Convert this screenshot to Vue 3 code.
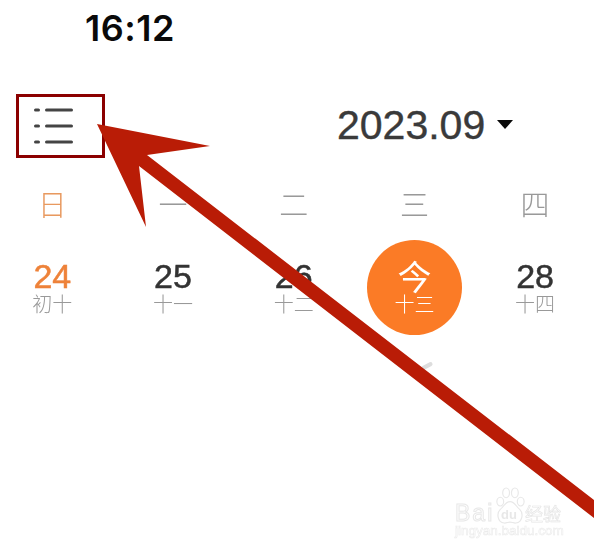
<template>
  <div class="page">
    <div class="status">16:12</div>

    <header class="head">
      <button class="menu" type="button">
        <svg width="40" height="36" viewBox="0 0 40 36">
          <g fill="none" stroke="#444" stroke-width="3" stroke-linecap="round">
            <path d="M2.500 2h3M13.500 2h25" />
            <path d="M2.500 18h3M13.500 18h25" />
            <path d="M2.500 34h3M13.500 34h25" />
          </g>
        </svg>
      </button>
      <div class="month">
        <span>2023.09</span>
        <i class="caret"></i>
      </div>
    </header>

    <div class="week">
      <span v-for="(w, i) in weekdays" :key="w" :class="{ sun: i === 0 }">{{ w }}</span>
    </div>

    <div class="days">
      <div
        v-for="d in days"
        :key="d.num"
        class="day"
        :class="{ sun: d.sun, today: d.today }"
      >
        <b>{{ d.today ? '今' : d.num }}</b>
        <small>{{ d.lunar }}</small>
      </div>
    </div>

    <div class="grip"></div>

    <svg class="arrow" width="594" height="551" viewBox="0 0 594 551">
      <path
        fill="#b91c06"
        d="M97 124 L210 146 L147 155 L594 500 L594 518 L139 166 L146 227 Z"
      />
    </svg>

    <div class="mark">
      <span class="bai">Bai</span>
      <span class="paw">
        <svg width="30" height="37" viewBox="0 0 30 38">
          <g fill="#fff" stroke="#e8e8e8" stroke-width="1.200">
            <ellipse cx="5" cy="15" rx="3.500" ry="4.500" />
            <ellipse cx="11" cy="6" rx="3.500" ry="5" />
            <ellipse cx="20" cy="6" rx="3.500" ry="5" />
            <ellipse cx="26" cy="15" rx="3.500" ry="4.500" />
            <path d="M15 15c5 0 6 5 10 8 4 4 3 13-4 14-2 .3-4-1-6-1s-4 1.300-6 1c-7-1-8-10-4-14 4-3 5-8 10-8z" />
          </g>
        </svg>
        <em>du</em>
      </span>
      <span class="jy">经验</span>
      <span class="url">jingyan.baidu.com</span>
    </div>
  </div>
</template>

<script setup>
const weekdays = ['日', '一', '二', '三', '四']

const days = [
  { num: 24, lunar: '初十', sun: true },
  { num: 25, lunar: '十一' },
  { num: 26, lunar: '十二' },
  { num: 27, lunar: '十三', today: true },
  { num: 28, lunar: '十四' }
]
</script>

<style>
html, body {
  margin: 0;
  background: #fff;
}
</style>

<style scoped>
.page {
  position: relative;
  width: 594px;
  height: 551px;
  overflow: hidden;
  background: #fff;
  font-family: "Liberation Sans", "Noto Sans CJK SC", sans-serif;
}
.status {
  width: 260px;
  padding-top: 8px;
  text-align: center;
  font-family: Inter, "Liberation Sans", sans-serif;
  font-size: 36px;
  line-height: 40px;
  font-weight: 600;
  letter-spacing: .5px;
  color: #0a0a0a;
}
.head {
  display: flex;
  align-items: center;
  margin-top: 46px;
  padding-left: 16px;
}
.menu {
  display: flex;
  align-items: center;
  box-sizing: border-box;
  width: 89px;
  height: 64px;
  padding: 0 0 0 14px;
  background: none;
  border: 3px solid #8b0000;
}
.month {
  display: flex;
  align-items: center;
  gap: 12px;
  margin-left: 232px;
  margin-top: -2px;
  font-size: 41px;
  line-height: 48px;
  color: #3a3a3a;
  -webkit-text-stroke: .4px currentColor;
}
.caret {
  width: 0;
  height: 0;
  margin-top: -1px;
  border-left: 8px solid transparent;
  border-right: 8px solid transparent;
  border-top: 9px solid #0a0a0a;
}
.week,
.days {
  display: grid;
  grid-template-columns: repeat(5, 120.7px);
  margin-left: -8px;
  text-align: center;
  will-change: transform;
}
.week {
  margin-top: 23px;
  font-family: "Noto Sans CJK SC", sans-serif;
  font-weight: 300;
  font-size: 29px;
  line-height: 44px;
  color: #999;
}
.week .sun {
  color: #e8995f;
}
.days {
  margin-top: 15px;
}
.day {
  display: flex;
  flex-direction: column;
  align-items: center;
  justify-content: center;
  justify-self: center;
  box-sizing: border-box;
  width: 95px;
  height: 95px;
  padding-bottom: 4px;
  border-radius: 50%;
}
.day b {
  font-size: 34px;
  line-height: 36px;
  font-weight: 400;
  color: #333;
  -webkit-text-stroke: .5px currentColor;
}
.day small {
  font-family: "Noto Sans CJK SC", sans-serif;
  font-size: 20px;
  line-height: 20px;
  font-weight: 300;
  color: #999;
}
.day.sun b {
  color: #ee8239;
}
.day.today {
  background: #fb7b26;
}
.day.today b {
  font-family: "Noto Sans CJK SC", sans-serif;
  font-weight: 400;
  -webkit-text-stroke: 0;
  color: #fff;
}
.day.today small {
  color: #fff;
}
.grip {
  position: absolute;
  left: 421px;
  top: 364px;
  width: 12px;
  height: 4px;
  border-radius: 2px;
  background: #ddd;
  transform: rotate(-28deg);
}
.arrow {
  position: absolute;
  left: 0;
  top: 0;
}
.mark {
  position: absolute;
  left: 455px;
  top: 487px;
  display: grid;
  grid-template-columns: 40px 30px 36px;
  grid-template-rows: 37px 14px;
  align-items: end;
  width: 106px;
}
.bai {
  font-size: 23px;
  line-height: 22px;
  letter-spacing: 2px;
  color: #fff;
  -webkit-text-stroke: 1px #e8e8e8;
}
.paw {
  position: relative;
  height: 37px;
}
.paw svg {
  display: block;
}
.paw em {
  position: absolute;
  left: 6px;
  bottom: 2px;
  font-style: normal;
  font-size: 13px;
  line-height: 15px;
  font-weight: 700;
  color: #e8e8e8;
}
.jy {
  font-family: "Noto Sans CJK SC", sans-serif;
  font-size: 18px;
  line-height: 22px;
  color: #fff;
  -webkit-text-stroke: .7px #e6e6e6;
}
.url {
  grid-column: 1 / -1;
  font-size: 13.500px;
  line-height: 14px;
  color: #fff;
  white-space: nowrap;
  -webkit-text-stroke: .6px #ebebeb;
}
</style>
